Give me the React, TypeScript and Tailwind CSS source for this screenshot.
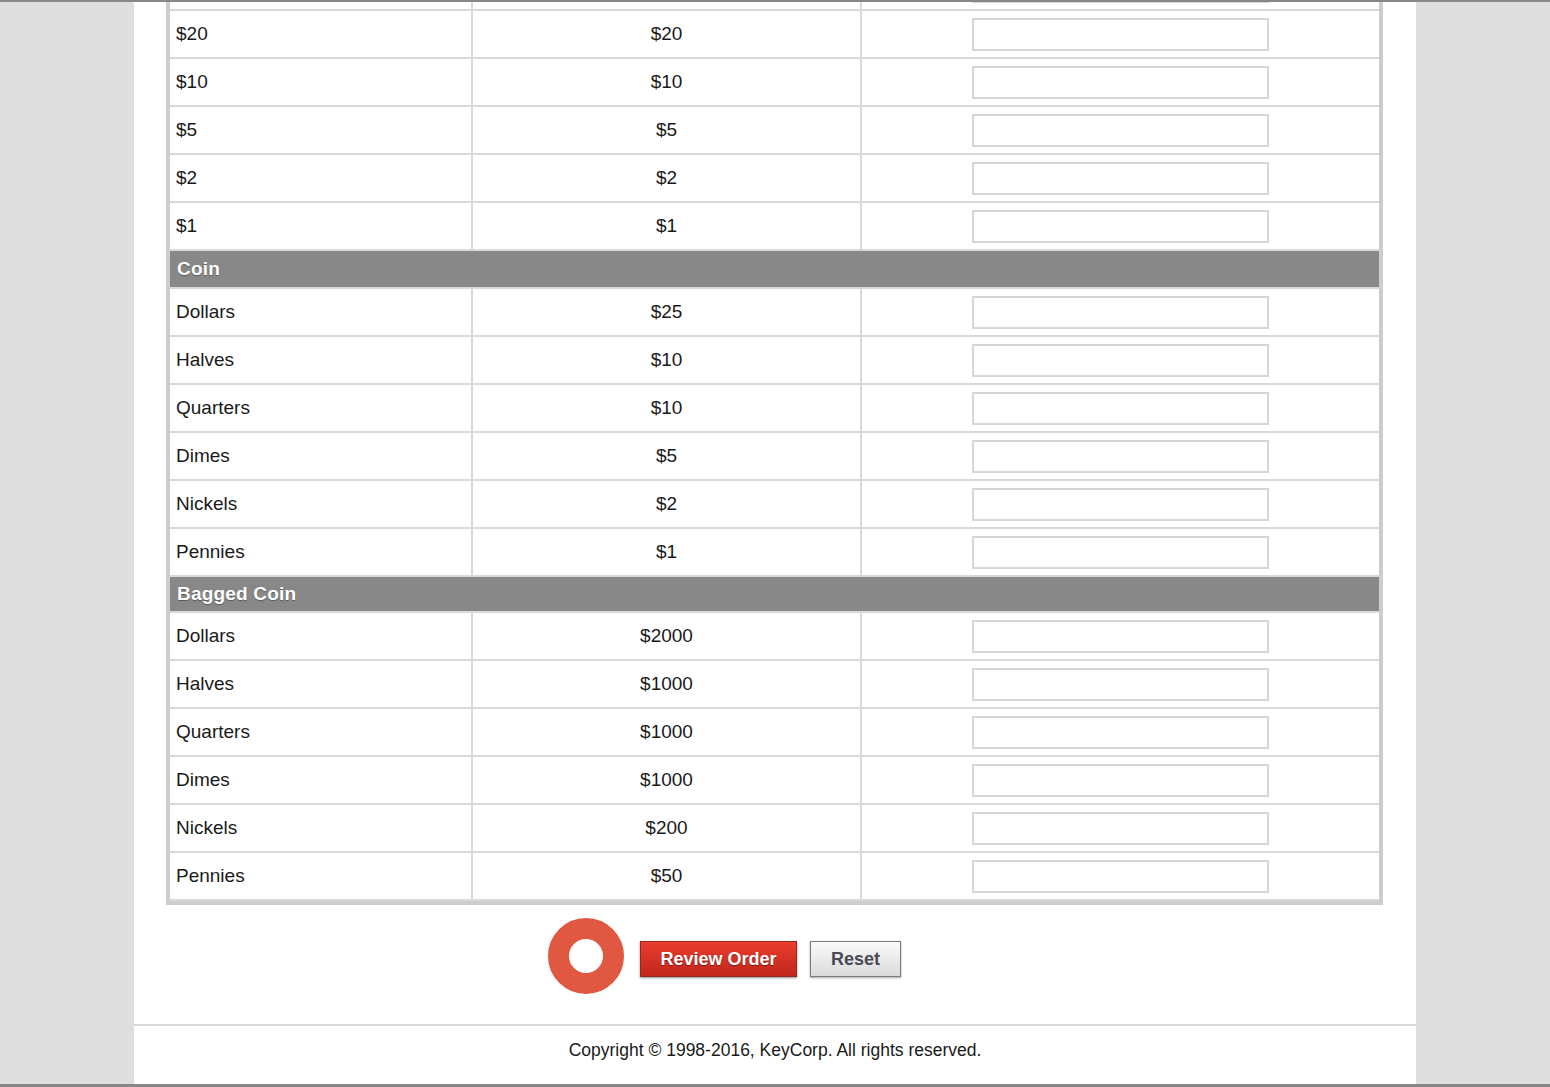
import React from "react";

type Row = { label: string; value: string };

const notes: Row[] = [
  { label: "$20", value: "$20" },
  { label: "$10", value: "$10" },
  { label: "$5", value: "$5" },
  { label: "$2", value: "$2" },
  { label: "$1", value: "$1" },
];

const coin: Row[] = [
  { label: "Dollars", value: "$25" },
  { label: "Halves", value: "$10" },
  { label: "Quarters", value: "$10" },
  { label: "Dimes", value: "$5" },
  { label: "Nickels", value: "$2" },
  { label: "Pennies", value: "$1" },
];

const bagged: Row[] = [
  { label: "Dollars", value: "$2000" },
  { label: "Halves", value: "$1000" },
  { label: "Quarters", value: "$1000" },
  { label: "Dimes", value: "$1000" },
  { label: "Nickels", value: "$200" },
  { label: "Pennies", value: "$50" },
];

function DataRow({ r }: { r: Row }) {
  return (
    <div className="flex h-[48px] border-b-2 border-[#d9d9d9]">
      <div className="flex w-[301px] items-center pl-[6px] text-[19px] text-[#1a1a1a]">{r.label}</div>
      <div className="flex w-[389px] items-center justify-center border-l-2 border-[#d9d9d9] text-[19px] text-[#1a1a1a]">
        {r.value}
      </div>
      <div className="flex flex-1 items-center justify-center border-l-2 border-[#d9d9d9]">
        <input
          type="text"
          className="h-[33px] w-[297px] border-2 border-[#d6d6d6] bg-white outline-none"
        />
      </div>
    </div>
  );
}

function HeaderRow({ title, h }: { title: string; h: string }) {
  return (
    <div className={`flex items-center border-b-2 border-[#d9d9d9] bg-[#888888] pl-[7px] ${h}`}>
      <span className="text-[19px] font-bold tracking-[0.2px] text-white [text-shadow:0_1px_1px_rgba(0,0,0,0.35)]">
        {title}
      </span>
    </div>
  );
}

export default function App() {
  return (
    <div
      className="h-[1087px] overflow-hidden border-t-2 border-b-[3px] border-[#878787] bg-[#dedede]"
      style={{ fontFamily: '"Liberation Sans", Arial, Helvetica, sans-serif' }}
    >
      <div className="ml-[134px] mt-[-39px] w-[1282px] bg-white">
        <div className="ml-[32px] w-[1217px] border-x-4 border-b-4 border-[#cdcdcd]">
          <DataRow r={{ label: "", value: "" }} />
          {notes.map((r) => (
            <DataRow key={"n" + r.label} r={r} />
          ))}
          <HeaderRow title="Coin" h="h-[38px]" />
          {coin.map((r) => (
            <DataRow key={"c" + r.label} r={r} />
          ))}
          <HeaderRow title="Bagged Coin" h="h-[36px]" />
          {bagged.map((r) => (
            <DataRow key={"b" + r.label} r={r} />
          ))}
        </div>

        <div className="flex h-[119px] justify-center pr-[9px] pt-[36px]">
          <div className="relative flex gap-[13px]">
            <svg
              className="absolute left-[-92px] top-[-23px]"
              width="76"
              height="76"
              viewBox="0 0 76 76"
            >
              <circle cx="38" cy="38" r="27.5" fill="none" stroke="#e05842" strokeWidth="21" />
            </svg>
            <button className="h-[36px] w-[157px] border border-[#8f2a20] bg-gradient-to-b from-[#ea3d2e] to-[#c1261b] text-[18px] font-bold text-white shadow-[0_1px_2px_rgba(0,0,0,0.45)] [text-shadow:0_1px_1px_rgba(0,0,0,0.45)]">
              Review Order
            </button>
            <button className="h-[36px] w-[91px] border border-[#7a7a7a] bg-gradient-to-b from-[#fbfbfb] to-[#dadada] text-[18px] font-bold text-[#4a4a55] shadow-[0_1px_2px_rgba(0,0,0,0.35)]">
              Reset
            </button>
          </div>
        </div>

        <div className="h-[60px] border-t-2 border-[#dadada] pt-[13px] text-center text-[17.5px] leading-[22px] text-[#1a1a1a]">
          Copyright © 1998-2016, KeyCorp. All rights reserved.
        </div>
      </div>
    </div>
  );
}
